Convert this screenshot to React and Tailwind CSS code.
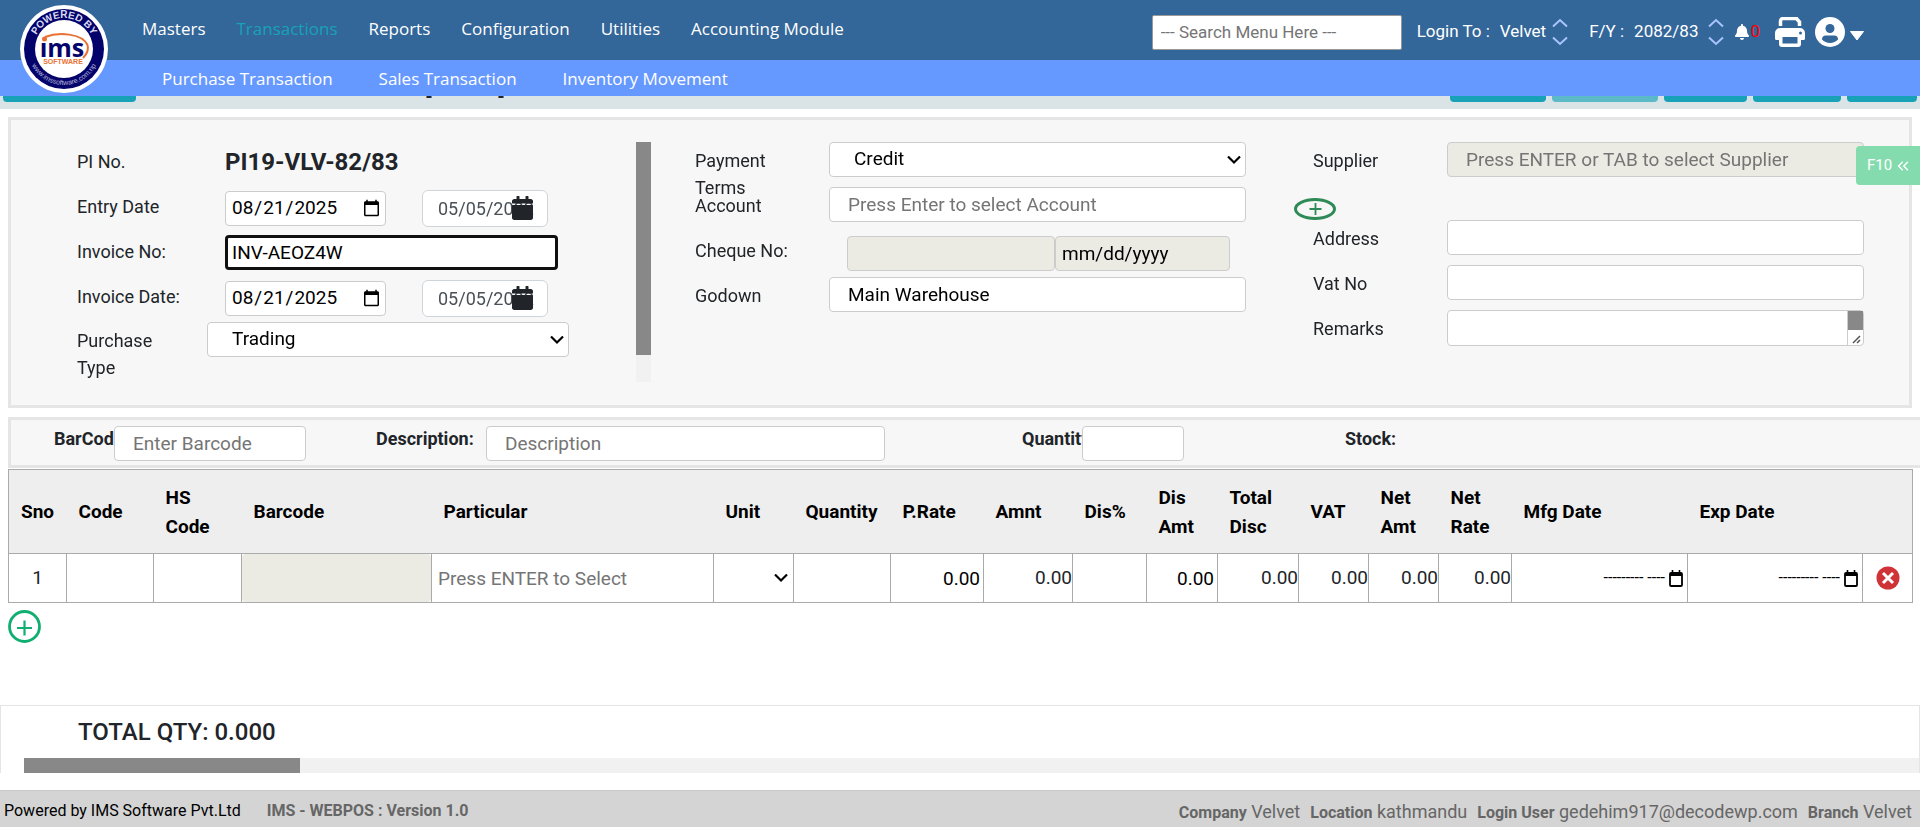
import { useEffect, useRef } from "react";
import { FaCalendar, FaBell } from "react-icons/fa";
import { ChevronsLeft } from "lucide-react";

const box = "h-[35px] rounded border border-[#ccc] text-[19px] text-black placeholder:text-[#757575]";
const field = box + " bg-white";
const leftLabel = "w-[148px] shrink-0 pt-[3px] leading-[27px]";
const label = "w-[134px] shrink-0 pt-[5px] leading-[27px]";

function Logo() {
  return (
    <svg viewBox="0 0 88 88" className="size-[88px]" role="img" aria-label="ims software">
      <defs>
        <path id="ringTop" d="M13 44a31 31 0 0 1 62 0" />
        <path id="ringBottom" d="M8 44a36 36 0 0 0 72 0" />
      </defs>
      <circle cx="44" cy="44" r="44" fill="#fff" />
      <circle cx="44" cy="44" r="40" fill="#03036b" />
      <circle cx="44" cy="44" r="29" fill="#fff" />
      <text fill="#d9d9ee" fontSize="10" fontWeight="700" fontFamily="Liberation Sans, sans-serif">
        <textPath href="#ringTop" startOffset="50%" textAnchor="middle">POWERED BY</textPath>
      </text>
      <text fill="#b9b9dc" fontSize="7" fontFamily="Liberation Sans, sans-serif">
        <textPath href="#ringBottom" startOffset="50%" textAnchor="middle">www.imssoftware.com.np</textPath>
      </text>
      <path d="M25 32C38 27 62 28 67.500 40c1.500 5-.500 9-4.500 13" fill="none" stroke="#ea7134" strokeWidth="2" />
      <circle cx="24.500" cy="34" r="2.500" fill="#ea7134" />
      <text x="42" y="52" textAnchor="middle" fill="#03036b" fontSize="25" fontWeight="700" fontFamily="Open Sans, sans-serif">ıms</text>
      <text x="43" y="59" textAnchor="middle" fill="#ea7134" fontSize="7" fontWeight="700" fontFamily="Liberation Sans, sans-serif">SOFTWARE</text>
    </svg>
  );
}

function UpDown() {
  return (
    <svg viewBox="0 0 16 28" className="h-7 w-4" fill="none" stroke="#a9c4ff" strokeWidth="2">
      <path d="M1 8.500 8 2l7 6.500M1 19.500 8 26l7-6.500" />
    </svg>
  );
}

function Header() {
  const menus = ["Masters", "Transactions", "Reports", "Configuration", "Utilities", "Accounting Module"];
  return (
    <header className="relative z-10 font-['Open_Sans',sans-serif] text-white">
      <div className="flex h-[60px] items-center bg-[#336699] pr-[55px] pl-[142px]">
        <nav className="flex gap-[31px] pb-0.5 text-[17px] font-medium">
          {menus.map((m) => (
            <a key={m} href="#" className={m === "Transactions" ? "text-[#17a2b8]" : ""}>{m}</a>
          ))}
        </nav>
        <div className="ml-auto flex items-center pt-1 font-[Roboto,sans-serif] text-[17px]">
          <input aria-label="Search menu" placeholder="--- Search Menu Here ---" className="mr-[15px] h-[35px] w-[250px] rounded-xs border border-[#999] bg-white px-2 text-black placeholder:text-[#757575]" />
          <span>Login To :</span>
          <button className="ml-2.5 flex items-center gap-1.5">Velvet <UpDown /></button>
          <span className="ml-[21px]">F/Y :</span>
          <button className="ml-2.5 flex items-center gap-2.5">2082/83 <UpDown /></button>
          <button aria-label="Notifications" className="ml-2.5 flex items-center text-[#f00]"><FaBell className="size-4 text-white" />0</button>
          <button aria-label="Print" className="ml-[15px]">
            <svg viewBox="0 0 30 30" className="size-[30px]">
              <path d="M5.500 9V4a2.500 2.500 0 0 1 2.500-2.500h13.500L24.500 5v4" fill="none" stroke="#fff" strokeWidth="3.500" />
              <path d="M5 11h20a5 5 0 0 1 5 5v5.500a1.500 1.500 0 0 1-1.500 1.500H26v4a3 3 0 0 1-3 3H7a3 3 0 0 1-3-3v-4H1.500A1.500 1.500 0 0 1 0 21.500V16a5 5 0 0 1 5-5zm2.500 9v6.500h15V20z" fill="#fff" fillRule="evenodd" />
              <circle cx="25.500" cy="16" r="1.500" fill="#336699" />
            </svg>
          </button>
          <button aria-label="Account" className="ml-2.5 flex items-center gap-1">
            <svg viewBox="0 0 30 30" className="size-[30px]">
              <circle cx="15" cy="15" r="15" fill="#fff" />
              <circle cx="15" cy="11.500" r="4.500" fill="#336699" />
              <path d="M7 22.500a4 4 0 0 1 4-4h8a4 4 0 0 1 4 4 11 11 0 0 1-16 0z" fill="#336699" />
            </svg>
            <svg viewBox="0 0 16 10" className="mt-2 h-2.5 w-4"><path d="M1.500.5h13L8 9z" fill="#fff" stroke="#fff" strokeLinejoin="round" /></svg>
          </button>
        </div>
      </div>
      <nav className="flex h-9 items-center gap-[46px] bg-[#6699ff] pt-1 pb-0.5 pl-[162px] text-[17px]">
        <a href="#">Purchase Transaction</a>
        <a href="#">Sales Transaction</a>
        <a href="#">Inventory Movement</a>
      </nav>
      <div className="absolute top-[5px] left-5"><Logo /></div>
    </header>
  );
}

function Select({ className, ...props }) {
  return (
    <div className="relative">
      <select {...props} className={"appearance-none " + className} />
      <svg viewBox="0 0 14 9" className="pointer-events-none absolute top-1/2 right-[5px] h-[9px] w-3.5 -translate-y-1/2" fill="none" stroke="#000" strokeWidth="2.200">
        <path d="m1 1 6 6 6-6" />
      </svg>
    </div>
  );
}

function NepaliDate({ id }) {
  return (
    <div className="relative h-[37px] w-[126px]">
      <input id={id} aria-label="Nepali date" defaultValue="05/05/2082" className="h-full w-full rounded-md border border-[#ced4da] bg-white pl-[15px] text-[18px] text-[#495057]" />
      <FaCalendar className="absolute top-1.5 right-[15px] h-6 w-[21px] text-[#212529]" />
    </div>
  );
}

function DateRow({ id, text }) {
  return (
    <div className="flex h-[45px] items-start">
      <label htmlFor={id} className={leftLabel}>{text}</label>
      <div className="flex w-[323px] items-center justify-between">
        <input id={id} type="date" defaultValue="2025-08-21" className={field + " w-[161px] pr-0.5 pl-[5px]"} />
        <NepaliDate id={id + "-np"} />
      </div>
    </div>
  );
}

function InvoiceNumber() {
  const ref = useRef(null);
  useEffect(() => {
    const end = ref.current.value.length;
    ref.current.focus();
    ref.current.setSelectionRange(end, end);
  }, []);
  return (
    <input ref={ref} id="invno" defaultValue="INV-AEOZ4W" className="h-[35px] w-[333px] rounded border-[3px] border-[#101010] bg-white px-1 text-[19px] text-black outline-none" />
  );
}

function EntryForm() {
  return (
    <section className="mx-2 mt-2 grid h-[291px] grid-cols-[1fr_618px_640px] border-[3px] border-[#e5e5e5] bg-[#f7f7f7] pt-[22px] text-[18px] text-[#212529]">
      <div className="flex h-60 justify-between pl-[66px]">
        <div className="w-[500px] pt-[3px]">
          <div className="flex h-[45px]">
            <span className={leftLabel}>PI No.</span>
            <span className="text-2xl leading-[34px] font-bold">PI19-VLV-82/83</span>
          </div>
          <DateRow id="entry" text="Entry Date" />
          <div className="flex h-[45px] items-start">
            <label htmlFor="invno" className={leftLabel}>Invoice No:</label>
            <InvoiceNumber />
          </div>
          <DateRow id="invdate" text="Invoice Date:" />
          <div className="-mt-[3px] flex items-start">
            <label htmlFor="ptype" className="w-[130px] pt-[5px] pr-8 leading-[27px]">Purchase Type</label>
            <Select id="ptype" className={field + " w-[362px] pl-6"}><option>Trading</option></Select>
          </div>
        </div>
        <div className="h-60 w-[15px] bg-[#f1f1f1]"><div className="h-[213px] bg-[#888]" /></div>
      </div>

      <div className="pl-11">
        <div className="flex h-[45px] items-start">
          <label htmlFor="terms" className={label + " pr-10"}>Payment Terms</label>
          <Select id="terms" className={field + " w-[417px] pl-6"}><option>Credit</option></Select>
        </div>
        <div className="flex h-[45px] items-start">
          <label htmlFor="acc" className={label}>Account</label>
          <input id="acc" placeholder="Press Enter to select Account" className={field + " w-[417px] px-[18px]"} />
        </div>
        <div className="flex h-[45px] items-start">
          <label htmlFor="cheque" className={label}>Cheque No:</label>
          <div className="flex pt-1 pl-[18px]">
            <input id="cheque" disabled className={box + " w-[208px] bg-[#ebebe4]"} />
            <input aria-label="Cheque date" defaultValue="mm/dd/yyyy" disabled className={box + " w-[175px] bg-[#ebebe4] px-1.5"} />
          </div>
        </div>
        <div className="flex h-[45px] items-start">
          <label htmlFor="godown" className={label}>Godown</label>
          <input id="godown" defaultValue="Main Warehouse" className={field + " w-[417px] px-[18px]"} />
        </div>
      </div>

      <div className="relative pl-11">
        <div className="flex h-[78px] items-start">
          <div>
            <label htmlFor="supplier" className={label + " block"}>Supplier</label>
            <button aria-label="Add supplier" className="mt-6 -ml-[19px] block">
              <svg viewBox="0 0 42 22" className="h-[22px] w-[42px]" fill="none" stroke="#2e8b57">
                <ellipse cx="21" cy="11" rx="19.500" ry="9.500" strokeWidth="3" />
                <path d="M15.500 11h12M21.500 5v12" strokeWidth="1.800" />
              </svg>
            </button>
          </div>
          <input id="supplier" placeholder="Press ENTER or TAB to select Supplier" className={box + " w-[417px] bg-[#ebebe4] px-[18px]"} />
        </div>
        <div className="flex h-[45px] items-start">
          <label htmlFor="address" className={label}>Address</label>
          <input id="address" className={field + " w-[417px]"} />
        </div>
        <div className="flex h-[45px] items-start">
          <label htmlFor="vat" className={label}>Vat No</label>
          <input id="vat" className={field + " w-[417px]"} />
        </div>
        <div className="flex h-[45px] items-start">
          <label htmlFor="remarks" className={label}>Remarks</label>
          <div className="relative h-9 w-[417px]">
            <textarea id="remarks" className="block h-full w-full resize-none rounded border border-[#ccc] bg-white" />
            <div className="absolute top-px right-px h-[34px] w-4 border-l border-[#ccc]">
              <div className="h-[19px] bg-[#888]" />
              <svg viewBox="0 0 15 15" className="size-[15px]" stroke="#555" strokeWidth="1.500"><path d="m5 13 7-7m-3 7 3-3" /></svg>
            </div>
          </div>
        </div>
        <button className="absolute top-1 -right-[11px] flex h-[39px] w-16 items-center gap-0.5 rounded-l bg-[#84dcae] pl-[11px] text-[15px] text-white">
          F10 <ChevronsLeft className="size-[18px]" />
        </button>
      </div>
    </section>
  );
}

function ItemSearch() {
  return (
    <section className="mt-[9px] ml-2 flex h-[51px] border-[3px] border-r-0 border-[#e5e5e5] bg-[#f7f7f7] pt-1.5 text-[18px] leading-[26px] font-bold text-[#212529]">
      <label htmlFor="bar" className="w-[103px] overflow-hidden pl-[43px]">BarCode:</label>
      <input id="bar" placeholder="Enter Barcode" className={field + " w-[192px] px-[18px] font-normal"} />
      <label htmlFor="desc" className="w-[180px] pl-[70px]">Description:</label>
      <input id="desc" placeholder="Description" className={field + " w-[399px] px-[18px] font-normal"} />
      <label htmlFor="qty" className="w-[197px] overflow-hidden pl-[137px]">Quantity:</label>
      <input id="qty" className={field + " w-[102px]"} />
      <span className="pl-[161px]">Stock:</span>
    </section>
  );
}

const columns = [
  ["Sno", "w-[58px]"], ["Code", "w-[87px]"], ["HS Code", "w-[88px]"], ["Barcode", "w-[190px]"],
  ["Particular", ""], ["Unit", "w-[80px]"], ["Quantity", "w-[97px]"], ["P.Rate", "w-[93px]"],
  ["Amnt", "w-[89px]"], ["Dis%", "w-[74px]"], ["Dis Amt", "w-[71px]"], ["Total Disc", "w-[81px]"],
  ["VAT", "w-[70px]"], ["Net Amt", "w-[70px]"], ["Net Rate", "w-[73px]"], ["Mfg Date", "w-[176px]"],
  ["Exp Date", "w-[175px]"], ["", "w-[50px]"],
];

function MonthCell({ name }) {
  return (
    <div className="flex items-center justify-end gap-1 pr-1">
      <input aria-label={name} defaultValue="--------- ----" className="w-full min-w-0 bg-transparent text-right text-[16px] text-black" />
      <button aria-label={name + " picker"}>
        <svg viewBox="0 0 14 17" className="h-[17px] w-3.5" fill="none" stroke="#000">
          <rect x="1" y="3" width="12" height="13" rx="1" strokeWidth="1.800" />
          <path d="M1 4.500h12" strokeWidth="3" />
          <path d="M3.500 0v3M10.500 0v3" strokeWidth="1.600" />
        </svg>
      </button>
    </div>
  );
}

function Items() {
  const cell = "border border-[#aaa] p-0";
  const input = "block h-12 w-full bg-transparent text-black";
  return (
    <section className="mr-[7px] ml-2 mt-px">
      <table className="w-full table-fixed border-collapse text-[19px] text-[#212529]">
        <thead>
          <tr className="h-[84px] bg-[#eee] text-black">
            {columns.map(([name, width]) => (
              <th key={name} className={width + " border-y border-[#aaa] pr-2 pl-3 text-left leading-[29px] font-bold first:border-l last:border-r"}>{name}</th>
            ))}
          </tr>
        </thead>
        <tbody>
          <tr className="h-[49px] bg-white text-right">
            <td className={cell + " text-center"}>1</td>
            <td className={cell}><input aria-label="Code" className={input} /></td>
            <td className={cell}><input aria-label="HS Code" className={input} /></td>
            <td className={cell}><input aria-label="Barcode" disabled className="block h-12 w-full rounded bg-[#ebebe4]" /></td>
            <td className={cell}><input aria-label="Particular" placeholder="Press ENTER to Select" className={input + " px-1.5 placeholder:text-[#757575]"} /></td>
            <td className={cell}><Select aria-label="Unit" className={input}><option></option></Select></td>
            <td className={cell}><input aria-label="Quantity" className={input} /></td>
            <td className={cell}><input aria-label="P.Rate" defaultValue="0.00" className={input + " pr-[3px] text-right"} /></td>
            <td className={cell}>0.00</td>
            <td className={cell}><input aria-label="Dis%" className={input} /></td>
            <td className={cell}><input aria-label="Dis Amt" defaultValue="0.00" className={input + " pr-[3px] text-right"} /></td>
            <td className={cell}>0.00</td>
            <td className={cell}>0.00</td>
            <td className={cell}>0.00</td>
            <td className={cell}>0.00</td>
            <td className={cell}><MonthCell name="Mfg Date" /></td>
            <td className={cell}><MonthCell name="Exp Date" /></td>
            <td className={cell}>
              <button aria-label="Delete row" className="mx-auto block">
                <svg viewBox="0 0 24 24" className="size-6">
                  <circle cx="12" cy="12" r="11.500" fill="#cf3237" />
                  <path d="m7 7 10 10M17 7 7 17" stroke="#fff" strokeWidth="3" />
                </svg>
              </button>
            </td>
          </tr>
        </tbody>
      </table>
      <button aria-label="Add row" className="mt-[7px] block">
        <svg viewBox="0 0 33 33" className="size-[33px]" fill="none" stroke="#0fae71">
          <circle cx="16.500" cy="16.500" r="15" strokeWidth="2.800" />
          <path d="M9 18h15M16.500 10.500v15" strokeWidth="2.200" />
        </svg>
      </button>
    </section>
  );
}

export default function App() {
  const actions = ["w-24", "w-[106px] opacity-65", "w-[83px]", "w-[88px]", "w-[70px]"];
  return (
    <div className="flex min-h-screen flex-col bg-white font-[Roboto,sans-serif]">
      <Header />
      <div className="flex h-[13px] items-start bg-[#dae4e6] px-[3px]">
        <button className="h-1.5 w-[133px] rounded-b bg-[#17a2b8]" />
        <div className="ml-[289px] flex h-[3px] w-20 items-end justify-between overflow-hidden text-2xl leading-[26px] font-bold text-[#212529]"><span>[</span><span>]</span></div>
        <div className="ml-auto flex gap-1.5">
          {actions.map((a) => <button key={a} className={a + " h-1.5 rounded-b bg-[#17a2b8]"} />)}
        </div>
      </div>
      <EntryForm />
      <ItemSearch />
      <Items />
      <section className="mt-auto mb-[17px] h-[68px] border border-b-0 border-[#e5e5e5] pt-2 pl-[23px]">
        <h2 className="pl-[54px] text-2xl leading-9 font-medium text-[#212529]">TOTAL QTY: 0.000</h2>
        <div className="mt-2 h-[15px] bg-[#f1f1f1]"><div className="h-full w-[276px] bg-[#888]" /></div>
      </section>
      <footer className="flex h-[37px] items-center gap-[26px] border-t border-[#c8c8c8] bg-[#d4d4d4] px-1 pt-1 text-[16px] text-[#666]">
        <span className="text-black">Powered by IMS Software Pvt.Ltd</span>
        <b>IMS - WEBPOS : Version 1.0</b>
        <div className="ml-auto flex gap-2.5 pr-1 text-[18px]">
          <span><b className="text-[16px]">Company</b> Velvet</span>
          <span><b className="text-[16px]">Location</b> kathmandu</span>
          <span><b className="text-[16px]">Login User</b> gedehim917@decodewp.com</span>
          <span><b className="text-[16px]">Branch</b> Velvet</span>
        </div>
      </footer>
    </div>
  );
}
